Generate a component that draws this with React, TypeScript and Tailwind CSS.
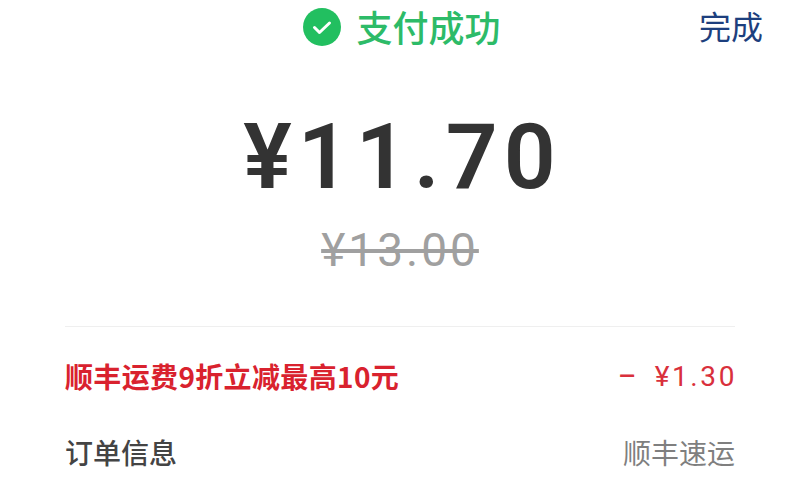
import React from "react";

const cjk = "font-['Noto_Sans_CJK_SC','Noto_Sans',sans-serif]";
const din = "font-['Roboto','Noto_Sans_CJK_SC',sans-serif]";

const App: React.FC = () => {
  return (
    <div className={`flex h-[480px] w-[800px] flex-col overflow-hidden bg-white px-[65px] ${cjk}`}>
      {/* Header */}
      <div className="relative mt-[4px] flex h-[46px] items-center justify-center">
        <div className="ml-[4px] flex items-center gap-[15px]">
          <svg width="38" height="38" viewBox="0 0 38 38">
            <circle cx="19" cy="19" r="19" fill="#22bf60" />
            <path d="M11.5 19.5l5 5L26.5 15" fill="none" stroke="#fff" strokeWidth="3" strokeLinecap="round" strokeLinejoin="round" />
          </svg>
          <span className="pb-[2px] text-[36px] leading-[46px] font-medium text-[#2dbb68]">支付成功</span>
        </div>
        <span className="absolute top-[-1px] right-[-28px] text-[32px] leading-[44px] text-[#1d3f7e]">完成</span>
      </div>

      {/* Amount */}
      <div className={`mt-[49px] pl-[5px] text-center text-[91px] leading-[116px] font-semibold tracking-[6px] text-[#333333] ${din}`}>
        ¥11.70
      </div>
      <div className={`mt-[9px] text-center text-[46px] leading-[52px] tracking-[3px] text-[#a0a0a0] line-through ${din}`}>
        ¥13.00
      </div>

      <div className="mt-[50px] h-px bg-[#efefef]" />

      {/* Discount */}
      <div className="mt-[29px] flex h-[40px] items-center justify-between">
        <span className="text-[28px] leading-[40px] font-bold tracking-[0.35px] text-[#d9222e]">顺丰运费9折立减最高10元</span>
        <span className={`mt-[2px] flex items-center gap-[16px] text-[28px] leading-[40px] tracking-[2.6px] text-[#d9303c] ${din}`}>
          <span className="font-medium">–</span>
          <span className="mr-[-2px]">¥1.30</span>
        </span>
      </div>

      {/* Order */}
      <div className="mt-[36px] flex h-[40px] items-center justify-between">
        <span className="text-[28px] leading-[40px] font-medium text-[#444444]">订单信息</span>
        <span className="text-[28px] leading-[40px] text-[#7f7f7f]">顺丰速运</span>
      </div>
    </div>
  );
};

export default App;
